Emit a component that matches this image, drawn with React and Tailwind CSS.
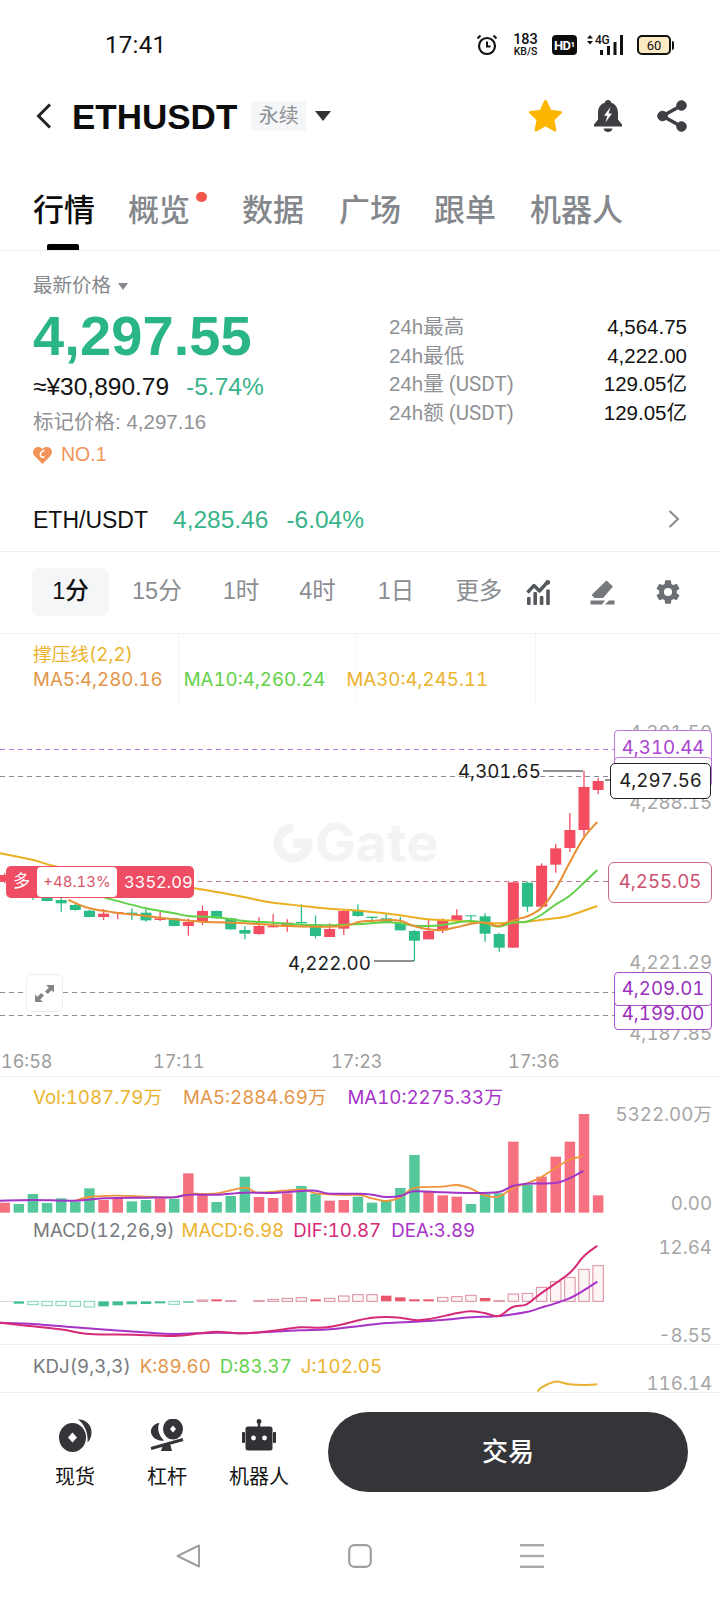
import { IoSettingsSharp } from "react-icons/io5";

// Chart series are stored at 3x so sub-pixel wicks and bars stay whole numbers.
const candleX = (i) => 4.67 + i * 14.13;
const px = (v, origin) => origin + v / 3;

// Catmull-Rom curve through the points, so the averages don't look jagged.
function smoothPath(points) {
  let d = `M${points[0][0]} ${points[0][1]}`;
  for (let i = 0; i < points.length - 1; i++) {
    const p0 = points[i - 1] || points[i];
    const p1 = points[i];
    const p2 = points[i + 1];
    const p3 = points[i + 2] || p2;
    const c1x = p1[0] + (p2[0] - p0[0]) / 6;
    const c1y = p1[1] + (p2[1] - p0[1]) / 6;
    const c2x = p2[0] - (p3[0] - p1[0]) / 6;
    const c2y = p2[1] - (p3[1] - p1[1]) / 6;
    d += ` C${c1x} ${c1y} ${c2x} ${c2y} ${p2[0]} ${p2[1]}`;
  }
  return d;
}

// Left half and right half of a series share one y origin; right half starts at x=360.
function series(left, right, yOrigin) {
  return [
    ...left.map(([x, y]) => [x / 3, px(y, yOrigin)]),
    ...right.map(([x, y]) => [360 + x / 3, px(y, yOrigin)]),
  ];
}

// [bodyTop, bodyBottom, wickTop, wickBottom, "r" | "g"], y = 840 + v / 3
const candles = [
  [105, 125, 100, 130, "r"], [100, 125, 95, 135, "g"], [150, 168, 140, 180, "g"], [170, 183, 165, 184, "g"],
  [180, 190, 170, 215, "g"], [195, 210, 190, 212, "g"], [212, 231, 210, 232, "g"], [221, 231, 207, 240, "r"],
  [216, 220, 216, 238, "r"], [218, 222, 205, 240, "g"], [218, 241, 208, 245, "g"], [235, 240, 212, 243, "r"],
  [235, 258, 233, 259, "g"], [246, 258, 235, 287, "r"], [213, 246, 197, 255, "r"], [213, 235, 212, 236, "g"],
  [235, 268, 233, 269, "g"], [270, 281, 258, 298, "g"], [258, 282, 232, 285, "r"], [258, 262, 222, 262, "r"],
  [248, 260, 238, 275, "r"], [246, 250, 193, 250, "g"], [253, 288, 227, 295, "g"], [267, 291, 250, 291, "r"],
  [213, 266, 211, 285, "r"], [212, 228, 193, 230, "g"], [230, 234, 230, 252, "g"], [235, 249, 222, 250, "g"],
  [250, 271, 230, 271, "g"], [273, 302, 270, 363, "g"], [273, 298, 240, 298, "r"], [240, 271, 235, 280, "r"],
  [226, 240, 208, 240, "r"], [226, 229, 226, 250, "g"], [229, 281, 220, 305, "g"], [282, 323, 278, 335, "g"],
  [127, 323, 127, 323, "r"], [128, 200, 125, 215, "g"], [77, 200, 70, 200, "r"], [25, 74, 12, 98, "r"],
  [-30, 24, -81, 36, "r"], [-159, -30, -207, -12, "r"], [-177, -150, -186, -138, "r"],
];

const ma5Line = series(
  [[205, 180], [268, 205], [350, 218], [438, 228], [523, 238], [608, 245], [692, 248], [777, 252], [862, 258], [947, 260], [1031, 258]],
  [[0, 245], [36, 243], [79, 240], [121, 242], [162, 258], [204, 268], [246, 270], [289, 262], [331, 252], [373, 248], [416, 258], [440, 248], [480, 235], [500, 230], [543, 205], [585, 150], [628, 70], [670, -5], [712, -54]],
  840
);
const ma10Line = series(
  [[310, 172], [438, 205], [523, 220], [565, 228], [650, 232], [735, 243], [820, 248], [904, 254], [989, 256]],
  [[0, 252], [79, 247], [121, 250], [162, 257], [204, 258], [246, 255], [289, 248], [331, 243], [373, 248], [416, 260], [458, 248], [500, 245], [543, 225], [585, 195], [628, 168], [670, 130], [712, 90]],
  840
);
const ma30Line = series(
  [[0, 40], [100, 60], [200, 85], [582, 145], [700, 165], [800, 185], [900, 197], [1000, 207]],
  [[0, 212], [36, 216], [120, 226], [204, 238], [289, 242], [373, 248], [416, 250], [458, 247], [500, 245], [585, 235], [628, 227], [712, 198]],
  840
);

// [top, "r" | "g"], bars stand on y = 1070 + 428 / 3
const volumes = [
  [398, "r"], [402, "g"], [372, "g"], [399, "g"], [385, "g"], [395, "g"], [355, "g"], [390, "r"], [385, "r"],
  [394, "g"], [390, "g"], [385, "r"], [387, "g"], [310, "r"], [375, "r"], [396, "g"], [378, "g"], [320, "g"],
  [381, "r"], [384, "r"], [370, "r"], [348, "g"], [372, "g"], [392, "r"], [390, "r"], [380, "g"], [398, "g"],
  [393, "g"], [354, "g"], [255, "g"], [365, "r"], [376, "r"], [380, "r"], [402, "g"], [372, "g"], [370, "g"],
  [215, "r"], [345, "g"], [320, "r"], [260, "r"], [215, "r"], [132, "r"], [376, "r"],
];

const volMa5Line = series(
  [[226, 392], [268, 381], [350, 377], [438, 380], [523, 382], [565, 372], [650, 370], [735, 353], [777, 368], [904, 358], [947, 370], [1031, 375]],
  [[0, 375], [36, 385], [79, 393], [121, 382], [162, 354], [246, 350], [289, 345], [331, 355], [373, 376], [416, 380], [458, 355], [500, 340], [543, 322], [585, 295], [628, 270], [670, 258]],
  1070
);
const volMa10Line = series(
  [[0, 392], [100, 390], [226, 392], [311, 385], [438, 383], [523, 382], [565, 374], [650, 374], [735, 368], [820, 369], [904, 363], [947, 362], [989, 371]],
  [[0, 371], [36, 374], [79, 381], [121, 378], [162, 364], [246, 367], [331, 369], [416, 366], [458, 348], [500, 341], [585, 339], [628, 325], [670, 303]],
  1070
);

// [edge, solid], histogram hangs off the zero line at y = 1210 + 274 / 3
const macdBars = [
  null, [281, 1], [284, 0], [287, 0], [287, 0], [289, 0], [291, 0], [289, 1], [286, 1], [283, 1], [282, 1], [280, 1],
  [283, 0], [278, 1], [270, 0], [268, 1], [272, 0], null, [272, 0], [268, 0], [265, 0], [263, 0], [268, 1], [265, 0],
  [258, 0], [254, 0], [254, 0], [257, 1], [262, 1], [268, 1], [268, 1], [262, 0], [260, 0], [256, 0], [264, 1], [272, 0],
  [252, 0], [250, 0], [232, 0], [215, 0], [202, 0], [178, 0], [167, 0],
];

const difLine = series(
  [[0, 338], [60, 345], [180, 358], [270, 372], [400, 374], [520, 378], [600, 370], [650, 365], [735, 370], [820, 362], [900, 352], [980, 352]],
  [[0, 330], [36, 323], [79, 321], [121, 323], [162, 330], [204, 328], [289, 310], [331, 304], [373, 309], [416, 318], [458, 291], [500, 283], [543, 250], [628, 190], [670, 140], [712, 107]],
  1210
);
const deaLine = series(
  [[0, 338], [100, 342], [200, 350], [300, 358], [430, 367], [520, 372], [650, 368], [735, 370], [820, 365], [900, 361], [990, 358]],
  [[0, 348], [79, 339], [162, 335], [246, 330], [331, 322], [416, 318], [500, 306], [543, 293], [585, 280], [628, 265], [670, 242], [712, 215]],
  1210
);
const kdjLine = series([], [[533, 545], [545, 532], [585, 515], [628, 523], [670, 525], [712, 523]], 1210);

function StatusBar() {
  return (
    <div className="flex h-[90px] items-center pl-[105px] pr-[46px] font-['Roboto','Noto_Sans_CJK_SC',sans-serif] text-[#111]">
      <span className="text-[24px] tracking-[0.3px]">17:41</span>
      <div className="ml-auto flex items-center">
        <svg width="22" height="22" viewBox="0 0 22 22" fill="none" stroke="#111" strokeWidth="2.2">
          <circle cx="11" cy="12" r="8" />
          <path d="M11 7.5V12.5H14.5" strokeWidth="2" />
          <path d="M1.5 4.5L4.5 1.5M20.5 4.5L17.5 1.5" strokeWidth="2" />
        </svg>
        <div className="ml-[14px] flex w-[27px] flex-col items-center">
          <span className="h-[13px] text-[14.5px] font-medium leading-[13px]">183</span>
          <span className="mt-[1px] h-[10px] text-[10.5px] font-medium leading-[10px]">KB/S</span>
        </div>
        <div className="ml-[13px] flex h-[20px] w-[25px] items-center justify-center rounded-[4px] bg-[#0c0c0c] text-white">
          <span className="text-[13px] font-bold leading-none tracking-[-0.5px]">HD</span>
          <span className="text-[8px] font-bold leading-none">1</span>
        </div>
        <div className="relative ml-[10px] h-[20px] w-[37px]">
          <svg className="absolute inset-0" width="37" height="20" viewBox="0 0 37 20" fill="#111">
            <path d="M3 0L6 3.6H0zM3 9.5L0 6H6z" />
            <rect x="13" y="15" width="3" height="5" />
            <rect x="20" y="11" width="3" height="9" />
            <rect x="26.5" y="7" width="3" height="13" />
            <rect x="33" y="0" width="3" height="20" />
          </svg>
          <span className="absolute left-[8px] top-[-1px] text-[12px] font-medium leading-[12px] tracking-[-0.3px]">4G</span>
        </div>
        <div className="ml-[13px] flex items-center">
          <div className="flex h-[20px] w-[34px] items-center justify-center rounded-[5px] border-2 border-[#111] bg-[#fbeac4] text-[13px] leading-none">
            60
          </div>
          <div className="ml-[1px] h-[9px] w-[2px] rounded-r-sm bg-[#111]" />
        </div>
      </div>
    </div>
  );
}

function Header() {
  return (
    <div className="flex h-[52px] items-center pl-[36px] pr-[33px]">
      <svg width="15" height="26" viewBox="0 0 15 26" fill="none" stroke="#222" strokeWidth="3">
        <path d="M14 1.5L2.5 13L14 24.5" />
      </svg>
      <h1 className="ml-[21px] text-[35px] font-bold leading-none text-[#0d0d0d]">ETHUSDT</h1>
      <span className="ml-[14px] flex h-[30px] w-[55px] items-center justify-center rounded-[2px] bg-[#f5f6f7] text-[20px] text-[#8d9094]">
        永续
      </span>
      <svg className="ml-[9px]" width="16" height="10" viewBox="0 0 16 10" fill="#333">
        <path d="M0 0H16L8 10z" />
      </svg>
      <svg className="ml-auto" width="35" height="34" viewBox="0 0 35 34" fill="#fdb600" stroke="#fdb600" strokeWidth="3" strokeLinejoin="round">
        <path d="M17.5 2.5L22 12.2L32.5 13.4L24.8 20.6L26.9 31L17.5 25.8L8.1 31L10.2 20.6L2.5 13.4L13 12.2z" />
      </svg>
      <svg className="ml-[31px]" width="28" height="32" viewBox="0 0 28 32">
        <path fill="#3d3f43" d="M14 0C16 0 17 1.2 17.2 2.7C21.8 4 24 8.2 24 13V19.5L28 24.6V26.6H0V24.6L4 19.5V13C4 8.2 6.2 4 10.8 2.7C11 1.2 12 0 14 0z" />
        <path fill="#3d3f43" d="M9.5 28.4H18.5C18 30.6 16.2 32 14 32C11.8 32 10 30.6 9.5 28.4z" />
        <path fill="#fff" d="M16.5 7L10 15.8H13.4L11.4 22.6L18 13.6H14.6z" />
      </svg>
      <svg className="ml-[35px]" width="30" height="32" viewBox="0 0 30 32" fill="#3d3f43" stroke="#3d3f43">
        <path d="M24.5 5.5L5.5 16L24.5 26.5" fill="none" strokeWidth="3.6" />
        <circle cx="24.5" cy="5.5" r="4.8" />
        <circle cx="5.5" cy="16" r="4.8" />
        <circle cx="24.5" cy="26.5" r="4.8" />
      </svg>
    </div>
  );
}

function Tabs() {
  return (
    <div className="h-[109px] border-b border-[#eeeff0] pl-[33px] pt-[51px]">
      <div className="flex h-[36px] items-center text-[31px] font-medium leading-[36px] text-[#84878b]">
        <span className="text-[#0d0d0d]">行情</span>
        <span className="relative ml-[33px] mr-[17px]">
          概览
          <span className="absolute right-[-17px] top-[-1px] h-[10px] w-[11px] rounded-full bg-[#f0564a]" />
        </span>
        <span className="ml-[35px]">数据</span>
        <span className="ml-[35px]">广场</span>
        <span className="ml-[33px]">跟单</span>
        <span className="ml-[34px]">机器人</span>
      </div>
      <div className="ml-[14px] mt-[15px] h-[6px] w-[32px] rounded-t-[2px] bg-black" />
    </div>
  );
}

function StatRow({ label, unit, value }) {
  return (
    <div className="flex h-[28.67px] items-center justify-between text-[20.5px]">
      <span className="text-[#8f9195]">
        {label}
        {unit && <span className="font-['Roboto',sans-serif]"> {unit}</span>}
      </span>
      <span className="text-[#111]">{value}</span>
    </div>
  );
}

function PriceInfo() {
  return (
    <div className="flex border-b border-[#eeeff0] pl-[33px] pr-[33px]">
      <div className="w-[356px] pt-[23px]">
        <div className="flex h-[24px] items-center text-[19.5px] text-[#85888c]">
          最新价格
          <svg className="ml-[7px]" width="10" height="7" viewBox="0 0 10 7" fill="#85888c">
            <path d="M0 0H10L5 7z" />
          </svg>
        </div>
        <div className="mt-[8px] h-[60px] text-[56px] font-bold leading-[60px] tracking-[0.1px] text-[#2ab585]">4,297.55</div>
        <div className="mt-[7px] flex h-[28px] items-center text-[24.5px]">
          <span className="text-[#111]">≈¥30,890.79</span>
          <span className="ml-[17px] text-[#38b48a]">-5.74%</span>
        </div>
        <div className="mt-[8px] h-[26px] text-[20.5px] leading-[26px] text-[#8f9195]">标记价格: 4,297.16</div>
        <div className="mt-[9px] flex h-[22px] items-center text-[19.5px] text-[#f3935a]">
          <svg width="19" height="17" viewBox="0 0 19 17">
            <path fill="#f3935a" d="M9.5 17L1.6 9C-0.6 6.6-0.4 3 1.8 1.2C4.2-0.8 7.6-0.2 9.5 2C11.4-0.2 14.8-0.8 17.2 1.2C19.4 3 19.6 6.6 17.4 9z" />
            <path fill="none" stroke="#fff" strokeWidth="1.6" d="M11.5 3.2C8.6 4.2 7 6.2 7.4 8.4C7.8 10.2 10 10.8 11.4 9.6" />
          </svg>
          <span className="ml-[9px]">NO.1</span>
        </div>
        <div className="mb-[16px] mt-[39px] flex h-[30px] items-center text-[23px]">
          <span className="text-[#111]">ETH/USDT</span>
          <span className="ml-[25px] text-[24.5px] text-[#38b48a]">4,285.46</span>
          <span className="ml-[18px] text-[24.5px] text-[#38b48a]">-6.04%</span>
        </div>
      </div>
      <div className="flex flex-1 flex-col">
        <div className="pt-[62px]">
          <StatRow label="24h最高" value="4,564.75" />
          <StatRow label="24h最低" value="4,222.00" />
          <StatRow label="24h量" unit="(USDT)" value="129.05亿" />
          <StatRow label="24h额" unit="(USDT)" value="129.05亿" />
        </div>
        <div className="mt-auto mb-[23px] flex justify-end pr-[7px]">
          <svg width="12" height="18" viewBox="0 0 12 18" fill="none" stroke="#85888c" strokeWidth="2">
            <path d="M1.5 1L10 9L1.5 17" />
          </svg>
        </div>
      </div>
    </div>
  );
}

function IntervalBar() {
  return (
    <div className="flex h-[82px] items-start border-b border-[#eeeff0] pl-[32px] pt-[16px]">
      <div className="flex h-[48px] w-[77px] items-center justify-center rounded-[8px] bg-[#f5f6f7] text-[23.5px] font-medium text-[#111]">
        1分
      </div>
      <div className="flex h-[48px] items-center text-[23.5px] text-[#8a8d91]">
        <span className="ml-[23px]">15分</span>
        <span className="ml-[41px]">1时</span>
        <span className="ml-[40px]">4时</span>
        <span className="ml-[42px]">1日</span>
        <span className="ml-[41px]">更多</span>
        <svg className="ml-[24px]" width="25" height="25" viewBox="0 0 25 25" fill="#55585c">
          <path d="M1.5 12.5L8 5.5L13.5 11L22 1.5" fill="none" stroke="#55585c" strokeWidth="3.4" strokeLinejoin="round" />
          <circle cx="21.8" cy="2.4" r="2.4" />
          <rect x="1" y="17" width="3.6" height="8" rx="1" />
          <rect x="7.4" y="12" width="3.6" height="13" rx="1" />
          <rect x="13.8" y="16" width="3.6" height="9" rx="1" />
          <rect x="20.2" y="9.5" width="3.6" height="15.5" rx="1" />
        </svg>
        <svg className="ml-[39px]" width="25" height="25" viewBox="0 0 25 25" fill="#75787c">
          <path d="M16.5 0.5L23 6.5L13 18H4.5L1.5 15z" />
          <path d="M0.5 20.5H15L12 24.5H0.5zM15 24.5L19 20.5H24.5V24.5z" />
        </svg>
        <IoSettingsSharp className="ml-[40px] text-[#6b6e72]" size={26} />
      </div>
    </div>
  );
}

function PriceChartLines() {
  return (
    <svg className="absolute inset-0 h-full w-full" viewBox="0 634 720 442" fill="none">
      <path d="M178.5 634V706M356.5 634V706M535.5 634V706" stroke="#f5f5f6" />
      <path d="M0 749.5H614" stroke="#b77de0" strokeDasharray="5 4" />
      <path d="M0 776.5H610" stroke="#8f8799" strokeDasharray="5 4" />
      <path d="M0 881.5H608" stroke="#c4798f" strokeDasharray="5 4" />
      <path d="M0 992.5H614" stroke="#8e8e8e" strokeDasharray="5 4" />
      <path d="M0 1015.5H614" stroke="#8e8e8e" strokeDasharray="5 4" />
      {candles.map(([top, bottom, wickTop, wickBottom, side], i) => {
        const color = side === "r" ? "#f44d62" : "#2bbd85";
        const x = candleX(i);
        return (
          <g key={i}>
            <path d={`M${x} ${px(wickTop, 840)}V${px(wickBottom, 840)}`} stroke={color} strokeWidth="1.3" />
            <rect x={x - 5.5} y={px(top, 840)} width="11" height={(bottom - top) / 3} fill={color} />
          </g>
        );
      })}
      <path d={smoothPath(ma30Line)} stroke="#eab021" strokeWidth="2" />
      <path d={smoothPath(ma10Line)} stroke="#62d14a" strokeWidth="2" />
      <path d={smoothPath(ma5Line)} stroke="#e68f34" strokeWidth="2" />
      <path d="M543 771H583M374 961H414M605 780H610" stroke="#222" strokeWidth="1" />
    </svg>
  );
}

function AxisValue({ className, children }) {
  return <span className={`absolute right-[8px] h-[24px] text-[18.7px] leading-[24px] text-[#a6a6a6] ${className}`}>{children}</span>;
}

function PriceChart() {
  return (
    <div className="relative h-[443px] overflow-hidden border-b border-[#eeeff0] font-['Inter','Noto_Sans_CJK_SC',sans-serif] text-[18.7px] tabular-nums">
      <div className="absolute left-[273px] top-[189px] flex items-center text-[#f1f3f4]">
        <svg width="40" height="40" viewBox="0 0 40 40" fill="none" stroke="#f1f3f4" strokeWidth="9">
          <path d="M20 5A15 15 0 1 0 35 20H20" />
        </svg>
        <span className="ml-[2px] text-[54px] font-bold leading-[40px]">Gate</span>
      </div>
      <PriceChartLines />
      <div className="relative pl-[33px] pt-[9px]">
        <div className="h-[24px] leading-[24px] text-[#ecb32e]">撑压线(2,2)</div>
        <div className="mt-[1px] flex h-[24px] leading-[24px]">
          <span className="text-[#e3964a]">MA5:4,280.16</span>
          <span className="ml-[21px] text-[#62d14a]">MA10:4,260.24</span>
          <span className="ml-[21px] text-[#ecb32e]">MA30:4,245.11</span>
        </div>
      </div>

      <AxisValue className="top-[87px]">4,301.50</AxisValue>
      <AxisValue className="top-[157px]">4,288.15</AxisValue>
      <AxisValue className="top-[317px]">4,221.29</AxisValue>
      <AxisValue className="top-[388px]">4,187.85</AxisValue>

      <div className="absolute right-[8px] top-[96px] flex h-[37px] w-[98px] items-center justify-center rounded-[4px] border border-[#b97ad9] bg-white text-[#a945d0]">
        4,310.44
      </div>
      <div className="absolute right-[8px] top-[123px] h-[30px] w-[98px] rounded-[4px] border border-[#b97ad9] bg-white" />
      <div className="absolute right-[9px] top-[129px] flex h-[36px] w-[101px] items-center justify-center rounded-[5px] border border-[#222] bg-white text-[#1c1c1c]">
        4,297.56
      </div>
      <div className="absolute right-[8px] top-[228px] flex h-[41px] w-[104px] items-center justify-center rounded-[6px] border border-[#c96a88] bg-white text-[#cc5070]">
        4,255.05
      </div>
      <div className="absolute right-[8px] top-[365px] flex h-[31px] w-[98px] items-center justify-center rounded-[4px] border border-[#a94fc9] bg-white text-[#9a2fbe]">
        4,199.00
      </div>
      <div className="absolute right-[8px] top-[338px] flex h-[34px] w-[98px] items-center justify-center rounded-[4px] border border-[#a94fc9] bg-white text-[#9a2fbe]">
        4,209.01
      </div>

      <span className="absolute left-[458px] top-[126px] h-[24px] leading-[24px] text-[#1c1c1c]">4,301.65</span>
      <span className="absolute left-[288px] top-[318px] h-[24px] leading-[24px] text-[#1c1c1c]">4,222.00</span>

      <div className="absolute left-[6px] top-[232px] flex h-[32px] w-[188px] items-center rounded-[5px] bg-[#ef4d63] text-white">
        <span className="w-[31px] text-center text-[17px]">多</span>
        <span className="flex h-[30px] w-[80px] items-center justify-center rounded-[4px] bg-white text-[15px] text-[#d8566c]">+48.13%</span>
        <span className="ml-[7px] text-[16.5px]">3352.09</span>
      </div>

      <div className="absolute left-[26px] top-[340px] flex h-[38px] w-[37px] items-center justify-center rounded-[5px] border border-[#eeeeee] bg-white">
        <svg width="19" height="17" viewBox="0 0 19 17" fill="#858585">
          <path d="M11 0H19V7.5L16.6 5.2L12.8 9L10 6.4L13.8 2.4z" />
          <path d="M8 17H0V9.5L2.4 11.8L6.2 8L9 10.6L5.2 14.6z" />
        </svg>
      </div>

      <div className="text-[18px] text-[#9c9c9c]">
        <span className="absolute left-[1px] top-[416px] leading-[24px]">16:58</span>
        <span className="absolute left-[153px] top-[416px] leading-[24px]">17:11</span>
        <span className="absolute left-[331px] top-[416px] leading-[24px]">17:23</span>
        <span className="absolute left-[508px] top-[416px] leading-[24px]">17:36</span>
      </div>
    </div>
  );
}

function VolumeChart() {
  return (
    <div className="relative h-[139px] pt-[9px] font-['Inter','Noto_Sans_CJK_SC',sans-serif] text-[18.7px] tabular-nums">
      <svg className="absolute inset-0 h-full w-full" viewBox="0 1077 720 139" fill="none">
        {volumes.map(([top, side], i) => (
          <rect
            key={i}
            x={candleX(i) - 5.25}
            y={px(top, 1070)}
            width="10.5"
            height={(428 - top) / 3}
            fill={side === "r" ? "#f7707f" : "#55c89b"}
          />
        ))}
        <path d={smoothPath(volMa5Line)} stroke="#f0953c" strokeWidth="1.8" />
        <path d={smoothPath(volMa10Line)} stroke="#a035c8" strokeWidth="2" />
      </svg>
      <div className="relative flex h-[24px] pl-[33px] leading-[24px]">
        <span className="text-[#ecb32e]">Vol:1087.79万</span>
        <span className="ml-[21px] text-[#e3964a]">MA5:2884.69万</span>
        <span className="ml-[21px] text-[#a733c9]">MA10:2275.33万</span>
      </div>
      <AxisValue className="top-[26px]">5322.00万</AxisValue>
      <AxisValue className="top-[115px]">0.00</AxisValue>
    </div>
  );
}

function MacdChart() {
  return (
    <div className="relative h-[129px] border-b border-[#eeeff0] pt-[3px] font-['Inter','Noto_Sans_CJK_SC',sans-serif] text-[18.7px] tabular-nums">
      <svg className="absolute inset-0 h-full w-full" viewBox="0 1216 720 128" fill="none">
        <path d="M0 1301.5H13" stroke="#d8d8d8" />
        {macdBars.map((bar, i) => {
          if (!bar) return null;
          const [edge, solid] = bar;
          const up = edge < 274;
          const top = px(Math.min(edge, 274), 1210);
          const height = Math.abs(edge - 274) / 3;
          const x = candleX(i) - 5.25;
          if (solid) {
            return <rect key={i} x={x} y={top} width="10.5" height={height} fill={up ? "#e8566c" : "#3fbd8f"} />;
          }
          return (
            <rect
              key={i}
              x={x}
              y={top}
              width="10.5"
              height={height}
              fill={up ? "#fdf4f5" : "#f3fbf8"}
              stroke={up ? "#dc8c9c" : "#84d4b8"}
              strokeWidth="1"
            />
          );
        })}
        <path d={smoothPath(deaLine)} stroke="#a733c9" strokeWidth="2" />
        <path d={smoothPath(difLine)} stroke="#d62a77" strokeWidth="2" />
      </svg>
      <div className="relative flex h-[24px] pl-[33px] leading-[24px]">
        <span className="text-[#77797c]">MACD(12,26,9)</span>
        <span className="ml-[7px] text-[#ecb32e]">MACD:6.98</span>
        <span className="ml-[9px] text-[#d62a77]">DIF:10.87</span>
        <span className="ml-[10px] text-[#a733c9]">DEA:3.89</span>
      </div>
      <AxisValue className="top-[20px]">12.64</AxisValue>
      <AxisValue className="top-[108px]">-8.55</AxisValue>
    </div>
  );
}

function KdjChart() {
  return (
    <div className="relative h-[48px] border-b border-[#eeeff0] pt-[10px] font-['Inter','Noto_Sans_CJK_SC',sans-serif] text-[18.7px] tabular-nums">
      <svg className="absolute inset-0 h-full w-full" viewBox="0 1345 720 47" fill="none">
        <path d={smoothPath(kdjLine)} stroke="#e9b233" strokeWidth="2" />
      </svg>
      <div className="relative flex h-[24px] pl-[33px] leading-[24px]">
        <span className="text-[#77797c]">KDJ(9,3,3)</span>
        <span className="ml-[9px] text-[#e3964a]">K:89.60</span>
        <span className="ml-[9px] text-[#62d14a]">D:83.37</span>
        <span className="ml-[9px] text-[#ecb32e]">J:102.05</span>
      </div>
      <AxisValue className="top-[27px]">116.14</AxisValue>
    </div>
  );
}

function BottomTool({ icon, label }) {
  return (
    <div className="flex w-[92px] flex-col items-center pt-[6px]">
      <div className="flex h-[34px] items-center justify-center">{icon}</div>
      <span className="mt-[12px] h-[26px] text-[20px] leading-[26px] text-[#151515]">{label}</span>
    </div>
  );
}

function BottomBar() {
  return (
    <div className="flex pl-[29px] pt-[19px]">
      <BottomTool
        label="现货"
        icon={
          <svg width="33" height="33" viewBox="0 0 33 33" fill="#333538">
            <path d="M20 0.5C27 0.5 32.5 6 32.5 13.5C32.5 17.5 31 21 28.6 23.4C29.3 14 25.5 5 18.8 0.6z" />
            <ellipse cx="13.5" cy="18.5" rx="13.5" ry="14.5" />
            <path fill="#fff" d="M13.5 13.5L18 18.5L13.5 23.5L9 18.5z" />
          </svg>
        }
      />
      <BottomTool
        label="杠杆"
        icon={
          <svg width="34" height="33" viewBox="0 0 34 33" fill="#333538">
            <ellipse cx="23" cy="10" rx="10" ry="10.5" />
            <path fill="#fff" d="M23 6.5L26 10L23 13.5L20 10z" />
            <path d="M9.5 4C7 8 8 16 14 21.5C8 22.5 2 19 1 13.5C0.4 9 4 4.5 9.5 4z" />
            <path d="M1 29.5L33 20.5" stroke="#333538" strokeWidth="3" />
            <path d="M13 26L20 24.5L22 32H11z" />
          </svg>
        }
      />
      <BottomTool
        label="机器人"
        icon={
          <svg width="34" height="32" viewBox="0 0 34 32" fill="#2f3135">
            <circle cx="17" cy="2.4" r="2.4" />
            <rect x="15.8" y="3" width="2.4" height="6" />
            <rect x="3.5" y="7.5" width="27" height="24" rx="2.5" />
            <rect x="0" y="13" width="3" height="11" rx="1" />
            <rect x="31" y="13" width="3" height="11" rx="1" />
            <circle cx="11.5" cy="19" r="2.4" fill="#fff" />
            <circle cx="22.5" cy="19" r="2.4" fill="#fff" />
          </svg>
        }
      />
      <button className="ml-[23px] flex h-[80px] w-[360px] items-center justify-center rounded-full bg-[#333538] text-[26px] font-medium text-white">
        交易
      </button>
    </div>
  );
}

function NavBar() {
  return (
    <div className="mt-[52px] flex justify-center gap-[148px]">
      <svg width="24" height="24" viewBox="0 0 24 24" fill="none" stroke="#a0a0a0" strokeWidth="2" strokeLinejoin="round">
        <path d="M23 1.5V22.5L1.5 12z" />
      </svg>
      <svg width="24" height="24" viewBox="0 0 24 24" fill="none" stroke="#a0a0a0" strokeWidth="2.2">
        <rect x="1.2" y="1.2" width="21.6" height="21.6" rx="5" />
      </svg>
      <svg width="24" height="24" viewBox="0 0 24 24" fill="#a8a8a8">
        <rect y="0" width="24" height="2.4" />
        <rect y="10.8" width="24" height="2.4" />
        <rect y="21.6" width="24" height="2.4" />
      </svg>
    </div>
  );
}

export default function App() {
  return (
    <div className="h-[1600px] w-[720px] overflow-hidden bg-white font-['Liberation_Sans','Noto_Sans_CJK_SC',sans-serif]">
      <StatusBar />
      <Header />
      <Tabs />
      <PriceInfo />
      <IntervalBar />
      <PriceChart />
      <VolumeChart />
      <MacdChart />
      <KdjChart />
      <BottomBar />
      <NavBar />
    </div>
  );
}
